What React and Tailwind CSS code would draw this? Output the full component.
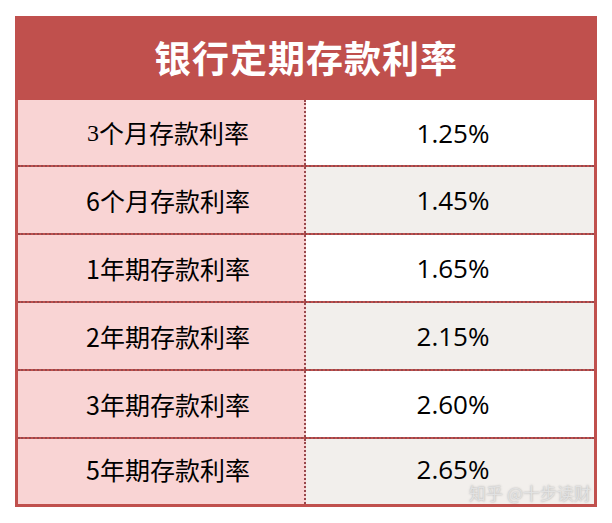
const rows = [
  { label: '3个月存款利率', rate: '1.25%', h: 'h-[67px]', bg: 'bg-white', serifDigit: true },
  { label: '6个月存款利率', rate: '1.45%', h: 'h-[68px]', bg: 'bg-[#f2efec]' },
  { label: '1年期存款利率', rate: '1.65%', h: 'h-[68px]', bg: 'bg-white' },
  { label: '2年期存款利率', rate: '2.15%', h: 'h-[68px]', bg: 'bg-[#f2efec]' },
  { label: '3年期存款利率', rate: '2.60%', h: 'h-[68px]', bg: 'bg-white' },
  { label: '5年期存款利率', rate: '2.65%', h: 'h-[65px]', bg: 'bg-[#f2efec]', last: true },
];

export default function App() {
  return (
    <div className="w-[612px] h-[523px] bg-white pt-[16px] pl-[15px] font-['Noto_Sans_CJK_SC',sans-serif]">
      <div className="relative w-[582px] border-[3px] border-[#c0504d] bg-[#c0504d]">
        {/* title */}
        <div className="h-[81px] flex items-center justify-center text-white text-[37px] font-bold tracking-[1px] pb-[3px]">
          银行定期存款利率
        </div>

        {rows.map((r) => (
          <div
            key={r.label}
            className={`flex ${r.h} ${r.last ? '' : 'border-b-2 border-dotted border-[#98474b]'}`}
          >
            <div className={`w-[288px] flex items-center justify-center pl-[14px] bg-[#f9d4d4] border-r-2 border-dotted border-[#98474b] text-black text-[25px] leading-none ${r.last ? 'pb-[4px]' : ''}`}>
              {r.serifDigit ? (
                <>
                  <span className="font-['Liberation_Serif',serif] text-[24px]">3</span>
                  <span>个月存款利率</span>
                </>
              ) : (
                r.label
              )}
            </div>
            <div className={`flex-1 flex items-center justify-center pl-[6px] ${r.bg} text-black text-[26px] leading-none font-['Open_Sans',sans-serif] ${r.last ? 'pb-[5px]' : ''}`}>
              {r.rate}
            </div>
          </div>
        ))}

        {/* watermark */}
        <div className="absolute right-[3px] bottom-[3px] text-[17px] leading-none text-[#e2e2e2] [text-shadow:0_0_2px_rgba(110,110,110,0.55)]">
          知乎 @十步读财
        </div>
      </div>
    </div>
  );
}
